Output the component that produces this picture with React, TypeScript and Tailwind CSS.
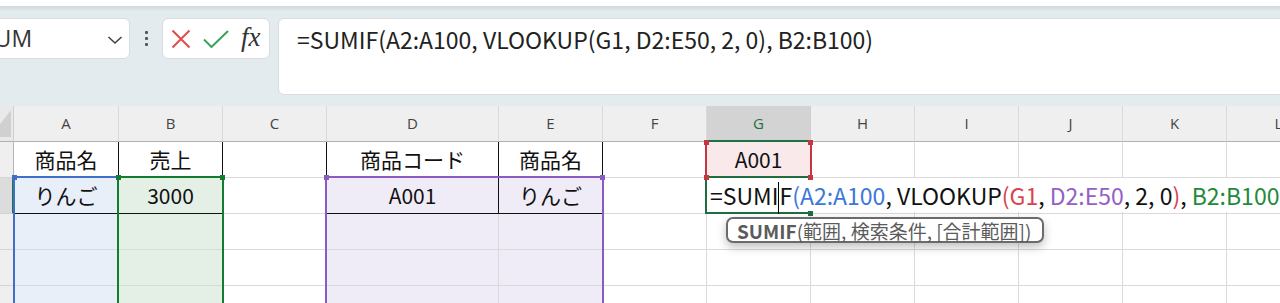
import React from "react";

type Col = { k: string; w: string };
const COLS: Col[] = [
  { k: "A", w: "w-[105px]" },
  { k: "B", w: "w-[104px]" },
  { k: "C", w: "w-[104px]" },
  { k: "D", w: "w-[172px]" },
  { k: "E", w: "w-[104px]" },
  { k: "F", w: "w-[104px]" },
  { k: "G", w: "w-[104px]" },
  { k: "H", w: "w-[104px]" },
  { k: "I", w: "w-[104px]" },
  { k: "J", w: "w-[104px]" },
  { k: "K", w: "w-[104px]" },
  { k: "L", w: "w-[104px]" },
];

const DATA: Record<string, string> = {
  "1A": "商品名",
  "1B": "売上",
  "1D": "商品コード",
  "1E": "商品名",
  "1G": "A001",
  "2A": "りんご",
  "2B": "3000",
  "2D": "A001",
  "2E": "りんご",
};

function bgFor(r: number, k: string): string {
  if (r === 1 && k === "G") return "bg-[#f9e9ea]";
  if (r >= 2 && k === "A") return "bg-[#e8eff9]";
  if (r >= 2 && k === "B") return "bg-[#e4efe6]";
  if (r >= 2 && (k === "D" || k === "E")) return "bg-[#f0ecf7]";
  return "bg-white";
}

function rightFor(r: number, k: string): string {
  if (r === 1 && ["A", "B", "C", "D", "E"].includes(k)) return "border-r-[#111]";
  if (r === 2 && k === "D") return "border-r-[#111]";
  return "border-r-[#dadada]";
}

function bottomFor(r: number, k: string): string {
  if (r === 2 && ["A", "B", "D", "E"].includes(k)) return "border-b-[#111]";
  return "border-b-[#dadada]";
}

function Square({ cls }: { cls: string }) {
  return <div className={"absolute w-[5px] h-[5px] z-20 " + cls} />;
}

export default function App() {
  const rows = [1, 2, 3, 4, 5];
  return (
    <div className="w-[1280px] h-[303px] overflow-hidden bg-white font-['Noto_Sans_CJK_JP',sans-serif]">
      <div className="h-[6px] bg-white" />
      {/* toolbar */}
      <div className="h-[100px] bg-[linear-gradient(to_bottom,#cfd7da_0px,#e3ebee_5px)] flex items-start pt-[12px]">
        <div className="ml-[-22px] w-[152px] h-[41px] shrink-0 bg-white rounded-[6px] border border-[#d7dde0] flex items-center justify-between pl-[3px] pr-[6px]">
          <span className="font-['Open_Sans',sans-serif] text-[23px] text-[#333] leading-none">SUM</span>
          <svg width="16" height="10" viewBox="0 0 16 10" className="mt-[2px]">
            <path d="M1.5 2 L8 8 L14.5 2" fill="none" stroke="#444" strokeWidth="1.6" />
          </svg>
        </div>
        <div className="w-[32px] h-[41px] shrink-0 flex flex-col items-center justify-center gap-[3px]">
          <div className="w-[3px] h-[3px] bg-[#555] rounded-[1px]" />
          <div className="w-[3px] h-[3px] bg-[#555] rounded-[1px]" />
          <div className="w-[3px] h-[3px] bg-[#555] rounded-[1px]" />
        </div>
        <div className="w-[108px] h-[41px] shrink-0 bg-white rounded-[6px] border border-[#d7dde0] flex items-center pl-[8px] gap-[12px]">
          <svg width="20" height="20" viewBox="0 0 20 20">
            <path d="M1.5 1.5 L18.5 18.5 M18.5 1.5 L1.5 18.5" stroke="#e5484d" strokeWidth="2" fill="none" />
          </svg>
          <svg width="26" height="18" viewBox="0 0 26 18">
            <path d="M1 9.5 L8.5 17 L25 1" stroke="#3aa35a" strokeWidth="2" fill="none" />
          </svg>
          <span className="font-['Liberation_Serif',serif] italic text-[27px] text-[#333] leading-none -mt-[3px]">fx</span>
        </div>
        <div className="ml-[8px] w-[1020px] h-[77px] shrink-0 bg-white rounded-[6px] border border-[#d7dde0] pl-[18px] pt-[5px]">
          <span className="text-[23px] leading-[30px] text-[#222] whitespace-pre">=SUMIF(A2:A100, VLOOKUP(G1, D2:E50, 2, 0), B2:B100)</span>
        </div>
      </div>

      {/* column header */}
      <div className="flex h-[36px]">
        <div className="w-[14px] shrink-0 bg-[#e9e9e9] border-r border-b border-r-[#cfcfcf] border-b-[#b0b0b0] relative overflow-hidden">
          <svg width="14" height="35" viewBox="0 0 14 35" className="absolute left-0 top-0">
            <polygon points="11,4 11,31 -10,31" fill="#d0d0d0" />
          </svg>
        </div>
        {COLS.map((c) =>
          c.k === "G" ? (
            <div
              key={c.k}
              className={c.w + " shrink-0 bg-[#d3d3d3] border-r border-r-[#cfcfcf] border-b-2 border-b-[#1e7145] flex items-center justify-center font-['Open_Sans',sans-serif] text-[15px] text-[#1e7145]"}
            >
              {c.k}
            </div>
          ) : (
            <div
              key={c.k}
              className={c.w + " shrink-0 bg-[#efefef] border-r border-r-[#d9d9d9] border-b border-b-[#b0b0b0] flex items-center justify-center font-['Open_Sans',sans-serif] text-[15px] text-[#444]"}
            >
              {c.k}
            </div>
          )
        )}
      </div>

      {/* body */}
      <div className="relative">
        {rows.map((r) => (
          <div key={r} className="flex h-[36px]">
            <div
              className={
                "w-[14px] shrink-0 border-b border-b-[#d4d4d4] " +
                (r === 2 ? "bg-[#dcdcdc] border-r-2 border-r-[#1e7145]" : "bg-[#efefef] border-r border-r-[#b5b5b5]")
              }
            />
            {COLS.map((c) => (
              <div
                key={c.k}
                className={
                  c.w +
                  " shrink-0 border-r border-b flex items-center justify-center text-[21px] text-[#111] leading-none " +
                  bgFor(r, c.k) +
                  " " +
                  rightFor(r, c.k) +
                  " " +
                  bottomFor(r, c.k)
                }
              >
                {DATA[`${r}${c.k}`] ?? ""}
              </div>
            ))}
          </div>
        ))}

        {/* range highlights */}
        <div className="absolute left-[13px] top-[34px] w-[106px] h-[200px] border-2 border-[#3f6fc8] z-10" />
        <div className="absolute left-[117px] top-[34px] w-[107px] h-[200px] border-2 border-[#137c2e] z-10" />
        <div className="absolute left-[325px] top-[34px] w-[279px] h-[200px] border-2 border-[#8a5cc2] z-10" />
        <div className="absolute left-[705px] top-[0px] w-[107px] h-[35px] border-l-2 border-r-2 border-[#c4373f] z-10" />
        <div className="absolute left-[705px] top-[34px] w-[106px] h-[38px] border-l-2 border-t-2 border-b-2 border-[#1e6e42] z-10" />

        <Square cls="left-[12px] top-[33px] bg-[#3f6fc8]" />
        <Square cls="left-[116px] top-[33px] bg-[#137c2e]" />
        <Square cls="left-[220px] top-[33px] bg-[#137c2e]" />
        <Square cls="left-[324px] top-[33px] bg-[#8a5cc2]" />
        <Square cls="left-[600px] top-[33px] bg-[#8a5cc2]" />
        <Square cls="left-[704px] top-[-2px] bg-[#c4373f]" />
        <Square cls="left-[808px] top-[-2px] bg-[#c4373f]" />
        <Square cls="left-[704px] top-[33px] bg-[#c4373f]" />
        <Square cls="left-[808px] top-[33px] bg-[#c4373f]" />
        <Square cls="left-[808px] top-[69px] bg-[#1e6e42]" />

        {/* in-cell edit text */}
        <div className="absolute left-[707px] top-[36px] w-[600px] h-[34px] bg-white z-10 pl-[3px] whitespace-pre text-[23px] text-[#111] leading-[34px]">
          <span>=SUMI</span>
          <span className="inline-block w-px h-[32px] bg-black align-middle -mt-[2px]" />
          <span>F</span>
          <span className="text-[#3b78d8]">(A2:A100</span>
          <span>, VLOOKUP</span>
          <span className="text-[#d9434f]">(G1</span>
          <span>, </span>
          <span className="text-[#9460c8]">D2:E50</span>
          <span>, 2, 0</span>
          <span className="text-[#d9434f]">)</span>
          <span>, </span>
          <span className="text-[#1f8a3b]">B2:B100</span>
          <span className="text-[#3b78d8]">)</span>
        </div>

        {/* tooltip */}
        <div className="absolute left-[726px] top-[75px] h-[26px] pl-[9px] pr-[11px] bg-white border-2 border-[#6b6b6b] rounded-[7px] shadow-[0_4px_10px_rgba(0,0,0,0.25)] z-30 flex items-center whitespace-pre text-[19px] leading-none text-[#5b5b5b]">
          <span className="font-bold">SUMIF</span>
          <span>(範囲, 検索条件, [合計範囲])</span>
        </div>
      </div>
    </div>
  );
}
